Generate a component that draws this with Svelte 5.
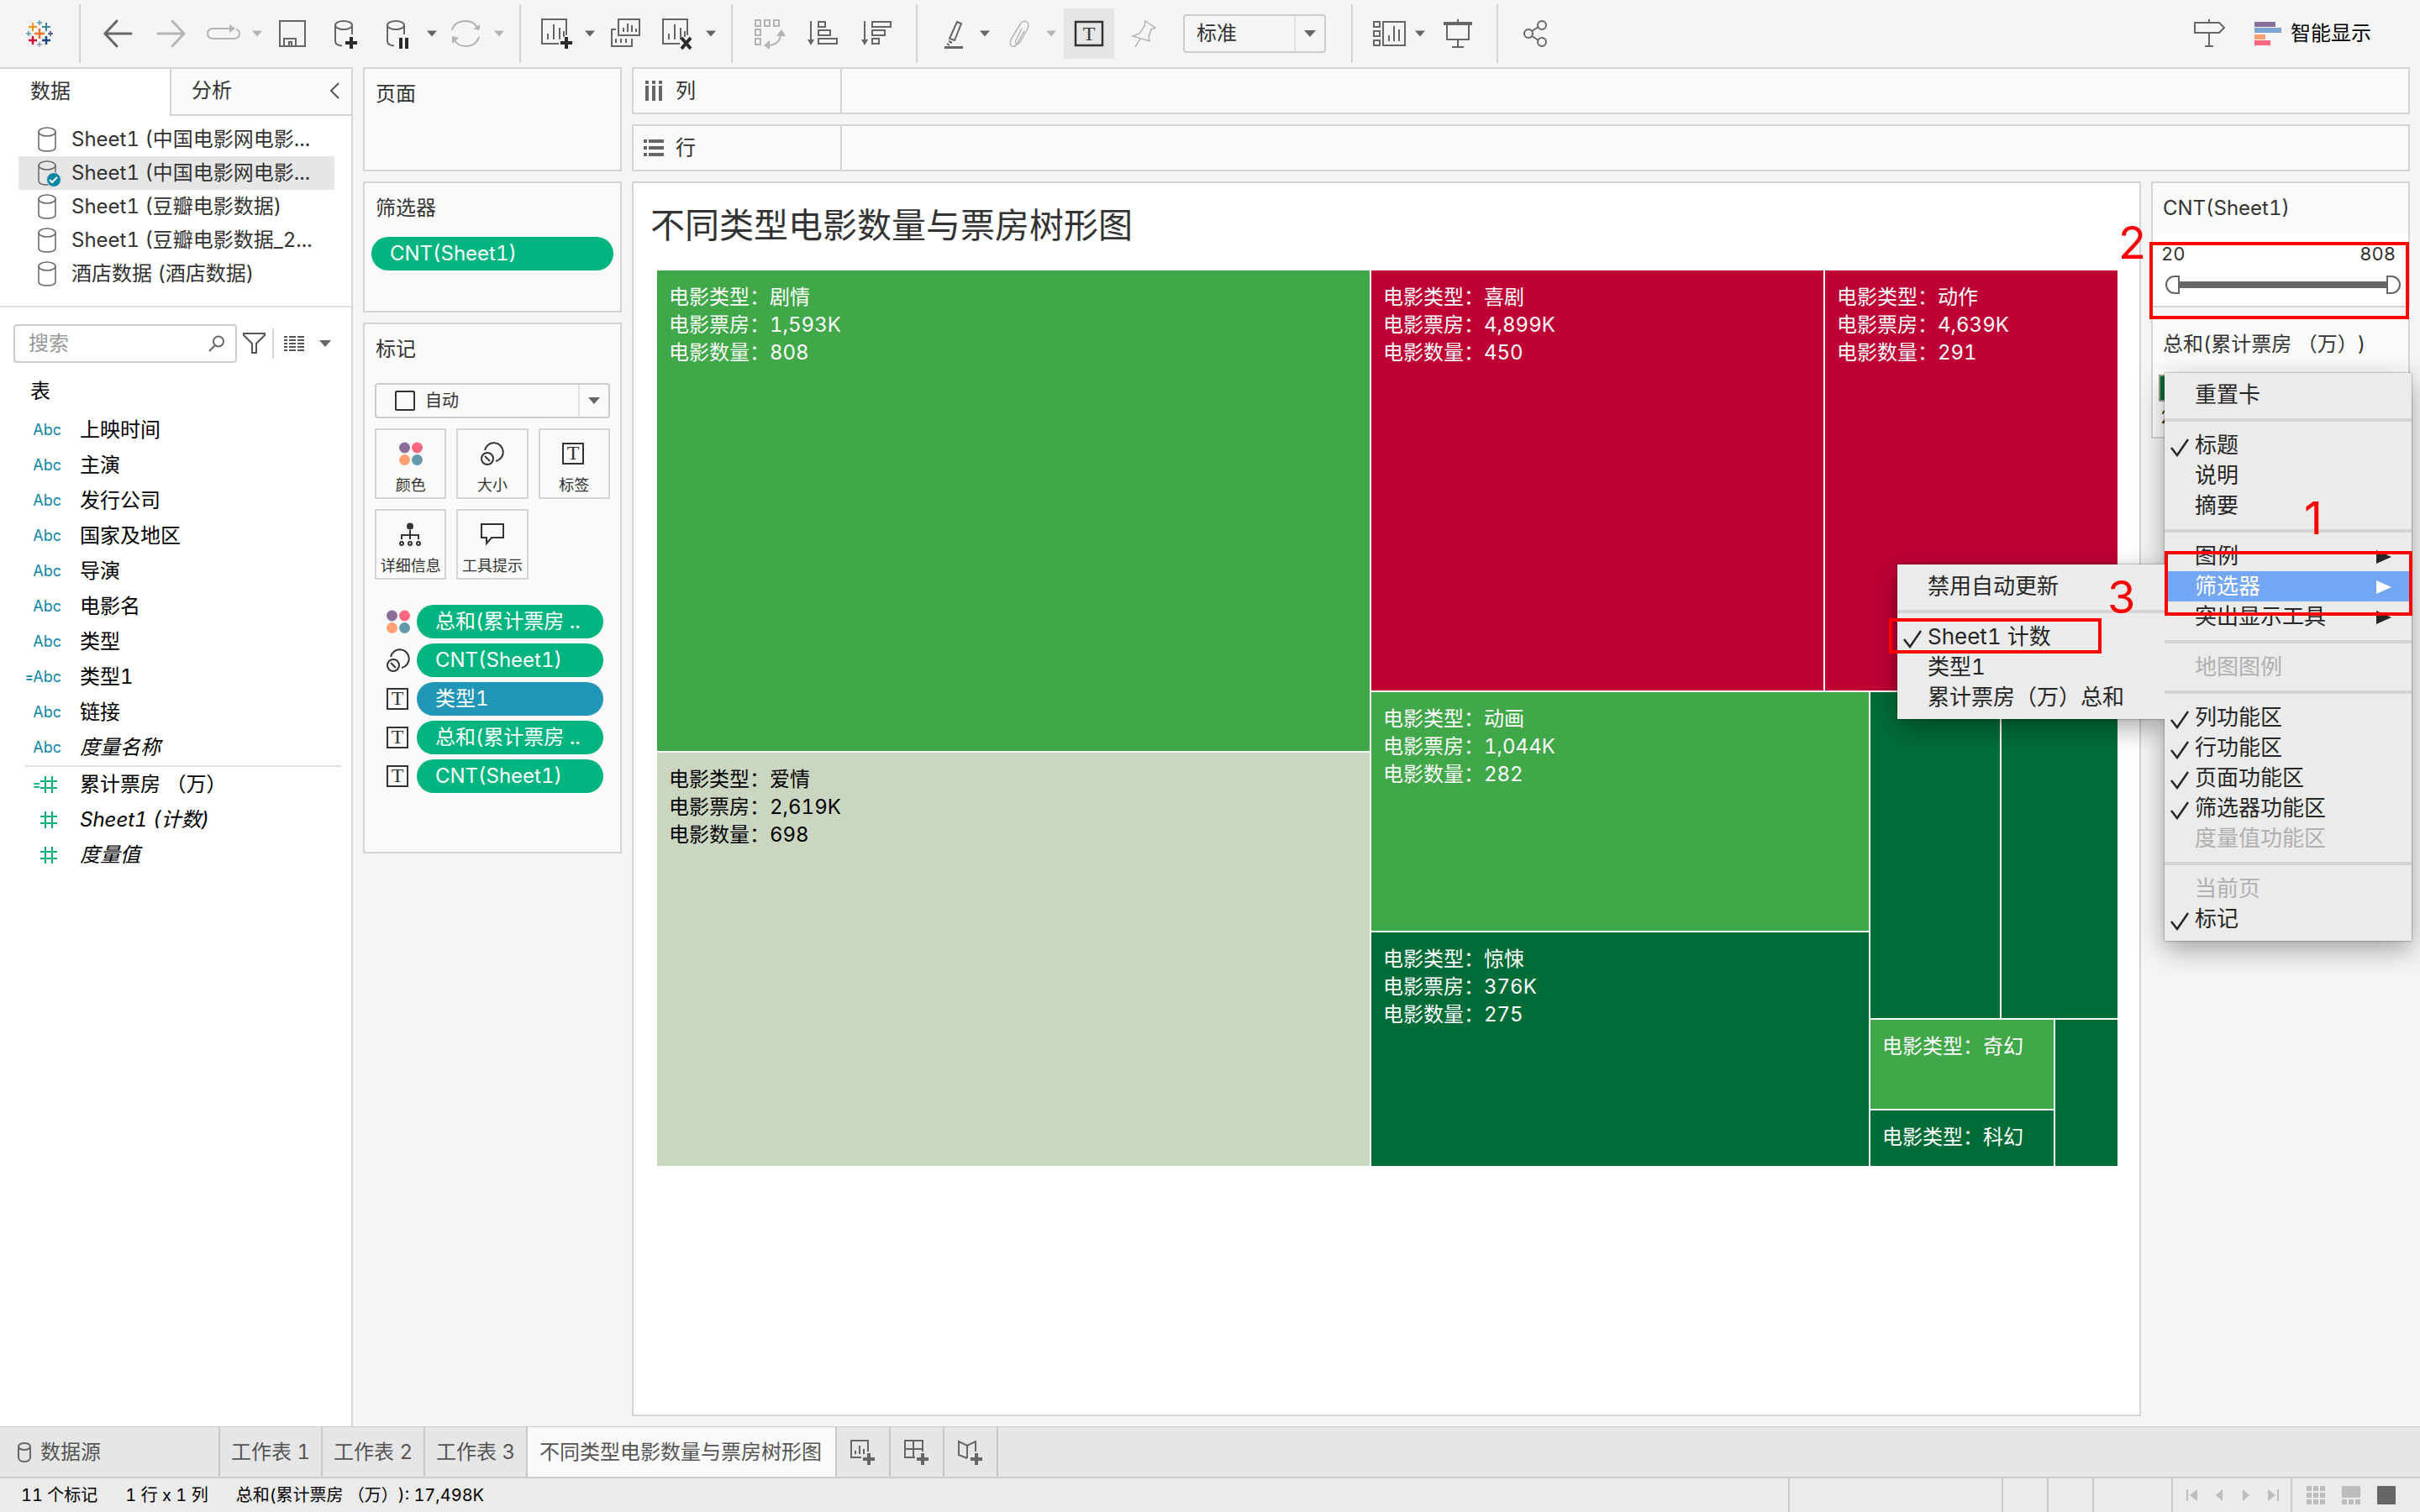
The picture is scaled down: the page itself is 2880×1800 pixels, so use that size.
<script lang="ts">
	type Tile = {
		size: number;
		tone: string;
		lines: string[];
	};

	type Split = {
		size: number;
		column?: boolean;
		items: (Tile | Split)[];
	};

	const sources = [
		{ name: 'Sheet1 (中国电影网电影...' },
		{ name: 'Sheet1 (中国电影网电影...', active: true },
		{ name: 'Sheet1 (豆瓣电影数据)' },
		{ name: 'Sheet1 (豆瓣电影数据_2...' },
		{ name: '酒店数据 (酒店数据)' }
	];

	const dimensions = [
		{ name: '上映时间' },
		{ name: '主演' },
		{ name: '发行公司' },
		{ name: '国家及地区' },
		{ name: '导演' },
		{ name: '电影名' },
		{ name: '类型' },
		{ name: '类型1', calc: true },
		{ name: '链接' },
		{ name: '度量名称', generated: true }
	];

	const measures = [
		{ name: '累计票房 （万）', calc: true },
		{ name: 'Sheet1 (计数)', generated: true },
		{ name: '度量值', generated: true }
	];

	const markButtons = [
		{ icon: 'color', label: '颜色' },
		{ icon: 'size', label: '大小' },
		{ icon: 'text', label: '标签' },
		{ icon: 'detail', label: '详细信息' },
		{ icon: 'tooltip', label: '工具提示' }
	];

	const markPills = [
		{ icon: 'color', label: '总和(累计票房 ..' },
		{ icon: 'size', label: 'CNT(Sheet1)' },
		{ icon: 'text', label: '类型1', dimension: true },
		{ icon: 'text', label: '总和(累计票房 ..' },
		{ icon: 'text', label: 'CNT(Sheet1)' }
	];

	const toolGroups = [
		{
			tight: false,
			tools: [
				{ icon: 'back', label: '撤消' },
				{ icon: 'forward', label: '重做', off: true },
				{ icon: 'replay', label: '重播', off: true, caret: true },
				{ icon: 'save', label: '保存' },
				{ icon: 'addSource', label: '新建数据源' },
				{ icon: 'pauseSource', label: '暂停自动更新', caret: true },
				{ icon: 'refresh', label: '运行更新', off: true, caret: true }
			]
		},
		{
			tight: false,
			tools: [
				{ icon: 'addSheet', label: '新建工作表', caret: true },
				{ icon: 'duplicate', label: '复制' },
				{ icon: 'clearSheet', label: '清除工作表', caret: true }
			]
		},
		{
			tight: false,
			tools: [
				{ icon: 'swap', label: '交换行和列', off: true },
				{ icon: 'sortAsc', label: '升序排序' },
				{ icon: 'sortDesc', label: '降序排序' }
			]
		},
		{
			tight: true,
			fit: true,
			tools: [
				{ icon: 'highlight', label: '突出显示', caret: true },
				{ icon: 'clip', label: '组成员', off: true, caret: true },
				{ icon: 'label', label: '显示标记标签', pressed: true },
				{ icon: 'pin', label: '固定轴', off: true }
			]
		},
		{
			tight: true,
			tools: [
				{ icon: 'cards', label: '显示/隐藏卡', caret: true },
				{ icon: 'present', label: '演示模式' }
			]
		},
		{
			tight: true,
			tools: [{ icon: 'share', label: '共享' }]
		}
	];

	const treemap: Split = {
		size: 1,
		items: [
			{
				size: 848,
				column: true,
				items: [
					{ size: 572, tone: 'green', lines: ['剧情', '1,593K', '808'] },
					{ size: 492, tone: 'pale', lines: ['爱情', '2,619K', '698'] }
				]
			},
			{
				size: 888,
				column: true,
				items: [
					{
						size: 500,
						items: [
							{ size: 538, tone: 'red', lines: ['喜剧', '4,899K', '450'] },
							{ size: 348, tone: 'red', lines: ['动作', '4,639K', '291'] }
						]
					},
					{
						size: 564,
						items: [
							{
								size: 592,
								column: true,
								items: [
									{ size: 284, tone: 'green', lines: ['动画', '1,044K', '282'] },
									{ size: 278, tone: 'deep', lines: ['惊悚', '376K', '275'] }
								]
							},
							{
								size: 294,
								column: true,
								items: [
									{
										size: 388,
										items: [
											{ size: 154, tone: 'deep', lines: [] },
											{ size: 138, tone: 'deep', lines: [] }
										]
									},
									{
										size: 174,
										items: [
											{
												size: 218,
												column: true,
												items: [
													{ size: 106, tone: 'green', lines: ['奇幻'] },
													{ size: 66, tone: 'deep', lines: ['科幻'] }
												]
											},
											{ size: 74, tone: 'deep', lines: [] }
										]
									}
								]
							}
						]
					}
				]
			}
		]
	};

	const captions = ['电影类型：', '电影票房：', '电影数量：'];

	const menu = [
		[{ label: '重置卡' }],
		[{ label: '标题', checked: true }, { label: '说明' }, { label: '摘要' }],
		[
			{ label: '图例', arrow: true },
			{ label: '筛选器', arrow: true, open: true },
			{ label: '突出显示工具', arrow: true }
		],
		[{ label: '地图图例', off: true }],
		[
			{ label: '列功能区', checked: true },
			{ label: '行功能区', checked: true },
			{ label: '页面功能区', checked: true },
			{ label: '筛选器功能区', checked: true },
			{ label: '度量值功能区', off: true }
		],
		[
			{ label: '当前页', off: true },
			{ label: '标记', checked: true }
		]
	];

	const submenu = [
		[{ label: '禁用自动更新' }],
		[
			{ label: 'Sheet1 计数', checked: true, marked: true },
			{ label: '类型1' },
			{ label: '累计票房（万）总和' }
		]
	];

	const sheets = ['工作表 1', '工作表 2', '工作表 3', '不同类型电影数量与票房树形图'];

	let current = $state(3);
	let low = $state(20);
	let high = $state(808);
</script>

{#snippet plus(x: number, y: number, r: number, w: number, color: string)}
	<path d="M{x - r} {y}h{r * 2}M{x} {y - r}v{r * 2}" stroke={color} stroke-width={w} />
{/snippet}

{#snippet caret()}
	<svg class="caret" width="14" height="8" viewBox="0 0 14 8"><path d="M0 0h14L7 8z" fill="currentColor" /></svg>
{/snippet}

{#snippet icon(name: string)}
	<svg class="icon" width="40" height="40" viewBox="0 0 40 40" fill="none" stroke="currentColor" stroke-width="2">
		{#if name === 'back'}
			<path d="M5 20h31M19 5L5 20l14 15" stroke-width="3" stroke-linecap="round" />
		{:else if name === 'forward'}
			<path d="M35 20H4M21 5l14 15-14 15" stroke-width="3" stroke-linecap="round" />
		{:else if name === 'replay'}
			<path d="M27 14H8q-7 0-7 6t7 6h24q7 0 7-6 0-4-4-5" />
			<path d="M27 9l7 5-7 5z" fill="currentColor" stroke="none" />
		{:else if name === 'save'}
			<path d="M5 5h30v30H5zM10 35v-9h14v9M16 35v-5h3v5" />
		{:else if name === 'addSource'}
			<ellipse cx="17" cy="10" rx="10" ry="5" />
			<path d="M7 10v19c0 3 3 5 8 5.500M27 10v11" />
			<path d="M19 31h14M26 24v14" class="strong" stroke-width="4" />
		{:else if name === 'pauseSource'}
			<ellipse cx="17" cy="10" rx="10" ry="5" />
			<path d="M7 10v19c0 3 3 5 8 5.500M27 10v11" />
			<path d="M23 25v13M30 25v13" class="strong" stroke-width="4" />
		{:else if name === 'refresh'}
			<path d="M4 16C6 9 12 5 20 5c8 0 13 4 15 11M36 24c-2 7-8 11-16 11-7 0-12-4-14-10" />
			<path d="M29 15h8v-6zM4 32v-9l8 2z" fill="currentColor" stroke="none" />
		{:else if name === 'addSheet' || name === 'clearSheet'}
			<path d="M23 32H3V3h29v19M10 27v-7M17 27V9M24 27V13M29 24v-7" />
			{#if name === 'addSheet'}
				<path d="M25 31h14M32 24v14" class="strong" stroke-width="4" />
			{:else}
				<path d="M25 25l11 13M36 25L25 38" class="strong" stroke-width="4" />
			{/if}
		{:else if name === 'duplicate'}
			<path d="M12 3h25v19H12zM18 18v-5M23 18V8M28 18v-8M33 18v-4M9 15H4v20h24v-9M9 31v-5M15 31v-5M21 31v-5" />
		{:else if name === 'swap'}
			<path d="M3 4h6v7H3zM14 4h6v7h-6zM25 4h6v7h-6zM3 15h6v7H3zM3 26h6v7H3zM33 20c0 8-4 13-14 14" />
			<path d="M28 23l6-8 5 8zM20 28v11l-7-5z" fill="currentColor" stroke="none" />
		{:else if name === 'sortAsc'}
			<path d="M5 5v24M14 6h8v6h-8zM14 16h14v6H14zM14 26h22v6H14z" />
			<path d="M1 27h8l-4 7z" fill="currentColor" stroke="none" />
		{:else if name === 'sortDesc'}
			<path d="M5 5v24M14 6h22v6H14zM14 16h15v6H14zM14 26h8v6h-8z" />
			<path d="M1 27h8l-4 7z" fill="currentColor" stroke="none" />
		{:else if name === 'highlight'}
			<path d="M24 6l5 2-8 20-6-2zM14 29l4 2M12 32l3 2" />
			<path d="M9 36.500h22" stroke-width="3" />
		{:else if name === 'clip'}
			<path d="M22 14l-7 14c-2 5 3 6 5 2l9-16c4-8-5-12-9-5L9 27c-3 9 4 10 7 6l9-16" stroke-width="1.500" />
		{:else if name === 'label'}
			<path d="M4 6h32v28H4z" stroke-width="2.500" />
			<text x="20" y="28" class="glyph">T</text>
		{:else if name === 'pin'}
			<path d="M22 5l12 8-5 2-3 9 1 5-20-6 8-3 6-9zM16 26L10 36" stroke-width="1.500" />
		{:else if name === 'cards'}
			<path d="M2 6h7v6H2zM2 17h7v6H2zM2 28h7v6H2zM13 6h26v28H13zM20 29v-7M26 29V11M32 29V15" />
		{:else if name === 'present'}
			<path d="M3 8h34" stroke-width="4" />
			<path d="M20 3v5M7 8v19h26V8M20 27v9M13 36h14" />
		{:else if name === 'share'}
			<circle cx="12" cy="20" r="5" />
			<circle cx="28" cy="10" r="5" />
			<circle cx="28" cy="30" r="5" />
			<path d="M16 17l8-5M16 23l8 5" />
		{:else if name === 'guide'}
			<path d="M3 7h29l6 6-6 6H3zM20 3v4M20 19v16M15 35h10" />
		{/if}
	</svg>
{/snippet}

{#snippet markIcon(name: string)}
	<svg class="icon" width="28" height="28" viewBox="0 0 28 28" fill="none" stroke="currentColor" stroke-width="2">
		{#if name === 'color'}
			<g stroke="none">
				<circle cx="6.500" cy="7" r="6.500" fill="#8a6d9b" />
				<circle cx="21.500" cy="7" r="6.500" fill="#ff6680" />
				<circle cx="6.500" cy="21.500" r="6.500" fill="#ff9f73" />
				<circle cx="21.500" cy="21.500" r="6.500" fill="#6399a8" />
			</g>
		{:else if name === 'size'}
			<path d="M5 10A11 11 0 1 1 18 23" />
			<circle cx="8" cy="20" r="7" />
			<path d="M5 17l6 6" />
		{:else if name === 'text'}
			<path d="M1 2h24v24H1z" />
			<text x="13" y="21" class="glyph">T</text>
		{:else if name === 'detail'}
			<circle cx="13" cy="4.500" r="4" fill="currentColor" stroke="none" />
			<path d="M13 9v11M3 20v-5h20v5" />
			<circle cx="3" cy="25" r="2" /><circle cx="13" cy="25" r="2" /><circle cx="23" cy="25" r="2" />
		{:else if name === 'tooltip'}
			<path d="M1 2h26v16H13l-6 7v-7H1z" />
		{/if}
	</svg>
{/snippet}

{#snippet cylinder()}
	<svg class="icon" width="22" height="30" viewBox="0 0 22 30" fill="none" stroke="currentColor" stroke-width="1.500">
		<ellipse cx="11" cy="6" rx="10" ry="5" />
		<path d="M1 6v18c0 3 4 5 10 5s10-2 10-5V6" />
	</svg>
{/snippet}

{#snippet cell(node: Tile | Split)}
	{#if 'items' in node}
		<div class="split" class:column={node.column} style="flex-grow: {node.size}">
			{#each node.items as item}
				{@render cell(item)}
			{/each}
		</div>
	{:else}
		<div class="tile {node.tone}" style="flex-grow: {node.size}">
			{#each node.lines as line, i}
				<p>{captions[i]}{line}</p>
			{/each}
		</div>
	{/if}
{/snippet}

{#snippet tick()}
	<svg class="tick" width="22" height="22" viewBox="0 0 22 22">
		<path d="M1 11l7 9L21 1" fill="none" stroke="currentColor" stroke-width="2.500" />
	</svg>
{/snippet}

<div class="app">
	<header class="toolbar">
		<a class="logo" href="#start" aria-label="开始页面">
			<svg width="32" height="32" viewBox="0 0 32 32">
				{@render plus(16, 16, 6, 2.5, '#f47421')}
				{@render plus(16, 3, 3, 1.5, '#5b9aa9')}
				{@render plus(8, 8, 5, 2, '#f28e1c')}
				{@render plus(24, 8, 5, 2, '#3a8594')}
				{@render plus(3, 16, 3, 1.5, '#5b9aa9')}
				{@render plus(29, 16, 3, 2, '#5b6591')}
				{@render plus(8, 24, 5, 2.5, '#d0103a')}
				{@render plus(24, 24, 5, 2.5, '#1f457e')}
				{@render plus(16, 29, 3, 1.5, '#8a95bd')}
			</svg>
		</a>
		{#each toolGroups as group}
			<div class="group" class:tight={group.tight}>
				{#each group.tools as tool}
					<button class="tool" class:off={tool.off} class:pressed={tool.pressed} class:drop={tool.caret} aria-label={tool.label}>
						<span class="tool-icon">{@render icon(tool.icon)}</span>
						{#if tool.caret}{@render caret()}{/if}
					</button>
				{/each}
				{#if group.fit}
					<div class="select fit">
						<select aria-label="适合">
							<option>标准</option>
						</select>
						<span class="select-caret">{@render caret()}</span>
					</div>
				{/if}
			</div>
		{/each}
		<button class="tool guide" aria-label="数据指南">{@render icon('guide')}</button>
		<button class="show-me">
			<svg width="32" height="28" viewBox="0 0 32 28">
				<path d="M0 0h25v6H0z" fill="#8a6d9b" />
				<path d="M0 7h32v6H0z" fill="#7aa6d1" />
				<path d="M0 15h13v6H0z" fill="#ff9f73" />
				<path d="M0 22h19v6H0z" fill="#ff6680" />
			</svg>
			智能显示
		</button>
	</header>

	<main class="workspace">
		<aside class="sidebar">
			<div class="side-tabs">
				<button class="side-tab active">数据</button>
				<button class="side-tab">
					分析
					<svg width="12" height="20" viewBox="0 0 12 20"><path d="M11 1L2 10l9 9" fill="none" stroke="#555" stroke-width="2" /></svg>
				</button>
			</div>
			<ul class="sources">
				{#each sources as source}
					<li class:active={source.active}>
						<span class="source-icon">
							{@render cylinder()}
							{#if source.active}
								<svg class="badge" width="18" height="18" viewBox="0 0 18 18">
									<circle cx="9" cy="9" r="8.500" fill="#0b85a5" stroke="#e6e6e6" />
									<path d="M4 9l3 3 6-6" fill="none" stroke="#fff" stroke-width="2" />
								</svg>
							{/if}
						</span>
						{source.name}
					</li>
				{/each}
			</ul>
			<div class="search-row">
				<label class="search">
					<input type="text" placeholder="搜索" aria-label="搜索" />
					<svg width="20" height="20" viewBox="0 0 20 20" fill="none" stroke="#666" stroke-width="2">
						<circle cx="12" cy="7.500" r="6" /><path d="M8 12l-7 7" />
					</svg>
				</label>
				<button class="mini" aria-label="筛选字段">
					<svg width="28" height="26" viewBox="0 0 28 26" fill="none" stroke="#555" stroke-width="2">
						<path d="M1 1h25v2l-10 10v11h-5V13L1 3z" />
					</svg>
				</button>
				<button class="mini view" aria-label="视图">
					<svg width="24" height="20" viewBox="0 0 24 20" stroke="#555" stroke-width="2">
						<path d="M0 2h4M6 2h8M16 2h8M0 6h4M6 6h8M16 6h8M0 10h4M6 10h8M16 10h8M0 14h4M6 14h8M16 14h8M0 18h4M6 18h8M16 18h8" />
					</svg>
					{@render caret()}
				</button>
			</div>
			<h2 class="table-name">表</h2>
			<ul class="fields">
				{#each dimensions as field}
					<li class:generated={field.generated}>
						<span class="type">{#if field.calc}<b>=</b>{/if}Abc</span>
						{field.name}
					</li>
				{/each}
			</ul>
			<ul class="fields measures">
				{#each measures as field}
					<li class:generated={field.generated}>
						<span class="type">
							{#if field.calc}<b>=</b>{/if}
							<svg width="20" height="20" viewBox="0 0 20 20" stroke="currentColor" stroke-width="2">
								<path d="M6 0v20M14 0v20M0 6h20M0 14h20" />
							</svg>
						</span>
						{field.name}
					</li>
				{/each}
			</ul>
		</aside>

		<div class="content">
			<div class="shelves">
				<section class="card pages">
					<h3>页面</h3>
				</section>
				<section class="card filters">
					<h3>筛选器</h3>
					<button class="pill">CNT(Sheet1)</button>
				</section>
				<section class="card marks">
					<h3>标记</h3>
					<div class="marks-body">
						<div class="select mark-type">
							<span class="square"></span>
							<select aria-label="标记类型">
								<option>自动</option>
							</select>
							<span class="select-caret">{@render caret()}</span>
						</div>
						<div class="mark-buttons">
							{#each markButtons as button}
								<button>{@render markIcon(button.icon)}{button.label}</button>
							{/each}
						</div>
						<ul class="mark-pills">
							{#each markPills as item}
								<li>
									{@render markIcon(item.icon)}
									<button class="pill" class:dimension={item.dimension}>{item.label}</button>
								</li>
							{/each}
						</ul>
					</div>
				</section>
			</div>

			<div class="stage">
				<div class="shelf">
					<span class="shelf-name">
						<svg width="24" height="24" viewBox="0 0 24 24" stroke="#666" stroke-width="4">
							<path d="M4 0v4M12 0v4M20 0v4M4 6v18M12 6v18M20 6v18" />
						</svg>
						列
					</span>
				</div>
				<div class="shelf">
					<span class="shelf-name">
						<svg width="24" height="24" viewBox="0 0 24 24" stroke="#666" stroke-width="4">
							<path d="M0 4h4M6 4h18M0 12h4M6 12h18M0 20h4M6 20h18" />
						</svg>
						行
					</span>
				</div>
				<div class="view-row">
					<section class="viz">
						<h1>不同类型电影数量与票房树形图</h1>
						<div class="treemap">{@render cell(treemap)}</div>
					</section>

					<div class="legends">
						<section class="card legend">
							<h3>CNT(Sheet1)</h3>
							<div class="legend-body">
								<div class="range-values"><span>{low}</span><span>{high}</span></div>
								<div class="range">
									<input class="low" type="range" min="20" max="808" bind:value={low} aria-label="最小值" />
									<input class="high" type="range" min="20" max="808" bind:value={high} aria-label="最大值" />
								</div>
							</div>
							<div class="note note-range"><span>2</span></div>
						</section>

						<section class="card legend">
							<h3>总和(累计票房 （万）)</h3>
							<div class="legend-body ramp">
								<div class="ramp-bar"></div>
								<span>2</span>
							</div>

							<div class="menu main-menu" role="menu">
								{#each menu as section}
									<div class="menu-section">
										{#each section as item}
											<div class="menu-row" class:open={item.open}>
												<button role="menuitem" disabled={item.off}>
													{#if item.checked}{@render tick()}{/if}
													{item.label}
													{#if item.arrow}
														<svg class="arrow" width="18" height="16" viewBox="0 0 18 16"><path d="M0 0l18 8-18 8z" fill="currentColor" /></svg>
													{/if}
												</button>
												{#if item.open}
													<div class="menu submenu" role="menu">
														{#each submenu as part}
															<div class="menu-section">
																{#each part as entry}
																	<div class="menu-row">
																		<button role="menuitem">
																			{#if entry.checked}{@render tick()}{/if}
																			{entry.label}
																		</button>
																		{#if entry.marked}
																			<div class="note note-entry"><span>3</span></div>
																		{/if}
																	</div>
																{/each}
															</div>
														{/each}
													</div>
													<div class="note note-item"><span>1</span></div>
												{/if}
											</div>
										{/each}
									</div>
								{/each}
							</div>
						</section>
					</div>
				</div>
			</div>
		</div>
	</main>

	<nav class="sheet-tabs">
		<button class="sheet source-tab">
			<svg width="18" height="24" viewBox="0 0 18 24" fill="none" stroke="#666" stroke-width="2">
				<ellipse cx="9" cy="5" rx="7" ry="4" /><path d="M2 5v13c0 3 3 5 7 5s7-2 7-5V5" />
			</svg>
			数据源
		</button>
		{#each sheets as sheet, i}
			<button class="sheet" class:current={i === current} onclick={() => (current = i)}>{sheet}</button>
		{/each}
		<button class="new-sheet" aria-label="新建工作表">
			<svg width="30" height="30" viewBox="0 0 30 30" fill="none" stroke="#666" stroke-width="2">
				<path d="M13 21H1V1h20v13M6 17v-4M11 17V7M16 17v-6" /><path d="M15 23h14M22 16v14" stroke-width="4" />
			</svg>
		</button>
		<button class="new-sheet" aria-label="新建仪表板">
			<svg width="30" height="30" viewBox="0 0 30 30" fill="none" stroke="#666" stroke-width="2">
				<path d="M13 21H1V1h21v13M1 11h21M11 1v20" /><path d="M15 23h14M22 16v14" stroke-width="4" />
			</svg>
		</button>
		<button class="new-sheet" aria-label="新建故事">
			<svg width="30" height="30" viewBox="0 0 30 30" fill="none" stroke="#666" stroke-width="2">
				<path d="M11 22L1 18V2l10 5 10-5v12M11 7v15" /><path d="M15 23h14M22 16v14" stroke-width="4" />
			</svg>
		</button>
	</nav>

	<footer class="status">
		<span>11 个标记</span>
		<span>1 行 x 1 列</span>
		<span>总和(累计票房 （万）): 17,498K</span>
		<div class="panes">
			<i class="wide"></i><i></i><i></i><i class="mid"></i>
			<div class="pager">
				<button aria-label="第一个"><svg width="14" height="14" viewBox="0 0 14 14"><path d="M0 0h2v14H0zM13 0v14L4 7z" fill="currentColor" /></svg></button>
				<button aria-label="上一个"><svg width="14" height="14" viewBox="0 0 14 14"><path d="M11 0v14L3 7z" fill="currentColor" /></svg></button>
				<button aria-label="下一个"><svg width="14" height="14" viewBox="0 0 14 14"><path d="M3 0v14l8-7z" fill="currentColor" /></svg></button>
				<button aria-label="最后一个"><svg width="14" height="14" viewBox="0 0 14 14"><path d="M12 0h2v14h-2zM1 0v14l9-7z" fill="currentColor" /></svg></button>
			</div>
			<div class="layouts">
				<button aria-label="缩略图">
					<svg width="22" height="22" viewBox="0 0 22 22" fill="currentColor">
						<path d="M0 0h6v6H0zM8 0h6v6H8zM16 0h6v6h-6zM0 8h6v6H0zM8 8h6v6H8zM16 8h6v6h-6zM0 16h6v6H0zM8 16h6v6H8zM16 16h6v6h-6z" />
					</svg>
				</button>
				<button aria-label="胶片">
					<svg width="22" height="22" viewBox="0 0 22 22" fill="currentColor">
						<path d="M0 0h22v14H0zM0 16h6v6H0zM8 16h6v6H8zM16 16h6v6h-6z" />
					</svg>
				</button>
				<button class="on" aria-label="选项卡">
					<svg width="22" height="22" viewBox="0 0 22 22" fill="currentColor"><path d="M0 0h22v22H0z" /></svg>
				</button>
			</div>
		</div>
	</footer>
</div>

<style>
	:global(body) {
		margin: 0;
	}

	.app {
		display: flex;
		flex-direction: column;
		min-height: 100vh;
		background: #f5f5f5;
		color: #333;
		font-family: Inter, 'Noto Sans CJK SC', sans-serif;
		font-size: 24px;
		font-variant-numeric: tabular-nums;
		line-height: 32px;
		text-spacing-trim: space-all;
	}

	h1,
	h2,
	h3,
	p,
	ul {
		margin: 0;
		padding: 0;
		font-weight: 400;
		list-style: none;
	}

	button,
	select,
	input {
		margin: 0;
		padding: 0;
		border: 0;
		background: none;
		color: inherit;
		font: inherit;
		white-space: nowrap;
	}

	svg {
		display: block;
		flex: none;
	}

	.glyph {
		fill: currentColor;
		stroke: none;
		font-family: 'Liberation Serif', serif;
		font-size: 24px;
		text-anchor: middle;
	}

	/* toolbar */
	.toolbar {
		display: flex;
		align-items: center;
		height: 80px;
		color: #666;
	}

	.logo {
		display: flex;
		align-items: center;
		justify-content: center;
		width: 94px;
		height: 70px;
		border-right: 2px solid #d4d4d4;
	}

	.group {
		display: flex;
		align-items: center;
		height: 70px;
		padding: 0 14px 0 12px;
		border-right: 2px solid #d4d4d4;
	}

	.tool {
		display: flex;
		align-items: center;
		height: 60px;
	}

	.tool-icon {
		display: flex;
		justify-content: center;
		width: 64px;
	}

	.drop .tool-icon {
		width: 60px;
	}

	.tool .caret {
		width: 12px;
		margin: 0 4px;
	}

	.tight {
		gap: 5px;
		padding: 0 16px;
	}

	.group:nth-last-child(3) {
		padding-left: 14px;
		border-right: 0;
	}

	.tight .tool-icon {
		width: 60px;
	}

	.tight .drop .tool-icon {
		width: 54px;
	}

	.off {
		color: #b4b4b4;
	}

	.pressed {
		background: #e6e6e6;
		color: #333;
	}

	.strong {
		stroke: #2b2b2b;
	}

	.guide {
		margin-left: auto;
		margin-right: 34px;
	}

	.show-me {
		display: flex;
		align-items: center;
		gap: 11px;
		margin-right: 58px;
		color: #000;
	}

	.select {
		display: flex;
		align-items: stretch;
		box-sizing: border-box;
		border: 2px solid #ccc;
		border-radius: 4px;
	}

	.select select {
		flex: 1;
		min-width: 0;
		appearance: none;
		color: #333;
	}

	.select-caret {
		display: flex;
		align-items: center;
		justify-content: center;
		width: 34px;
		border-left: 2px solid #e1e1e1;
		color: #666;
	}

	.fit {
		width: 170px;
		height: 46px;
		margin: 0 14px 0 12px;
	}

	.fit select {
		padding-left: 14px;
	}

	/* data pane */
	.workspace {
		display: flex;
		flex: 1;
		gap: 12px;
	}

	.sidebar {
		box-sizing: border-box;
		width: 420px;
		border: solid #d4d4d4;
		border-width: 2px 2px 0 0;
		background: #fff;
	}

	.side-tabs {
		display: flex;
	}

	.side-tab {
		display: flex;
		flex: 1;
		align-items: center;
		justify-content: space-between;
		height: 56px;
		padding: 0 14px 2px 24px;
		border: solid #d4d4d4;
		border-width: 0 0 2px 2px;
		background: #fafafa;
	}

	.side-tab.active {
		flex: 0 0 202px;
		padding-left: 36px;
		border: 0;
		background: #fff;
	}

	.sources {
		padding: 8px 20px 18px 22px;
		border-bottom: 2px solid #e1e1e1;
	}

	.sources li {
		display: flex;
		align-items: center;
		gap: 18px;
		height: 40px;
		padding-left: 23px;
		white-space: nowrap;
	}

	.sources li.active {
		background: #e6e6e6;
	}

	.source-icon {
		position: relative;
		color: #666;
	}

	.badge {
		position: absolute;
		right: -6px;
		bottom: -2px;
	}

	.search-row {
		display: flex;
		align-items: center;
		margin-top: 20px;
		padding: 0 24px 0 16px;
	}

	.search {
		display: flex;
		flex: 1;
		align-items: center;
		box-sizing: border-box;
		min-width: 0;
		height: 46px;
		padding: 0 12px 0 16px;
		border: 2px solid #ccc;
		border-radius: 4px;
	}

	.search input {
		flex: 1;
		min-width: 0;
		outline: 0;
	}

	.search input::placeholder {
		color: #999;
		opacity: 1;
	}

	.mini {
		display: flex;
		align-items: center;
		justify-content: space-between;
		height: 36px;
		padding: 0 7px;
		color: #666;
	}

	.mini.view {
		gap: 18px;
		padding: 0 0 0 12px;
		border-left: 2px solid #d4d4d4;
	}

	.table-name {
		margin: 18px 36px 9px;
		color: #000;
		font-size: 24px;
	}

	.fields {
		margin: 0 12px 0 30px;
		color: #000;
	}

	.measures {
		border-top: 2px solid #e1e1e1;
	}

	.fields li {
		display: flex;
		align-items: center;
		height: 42px;
	}

	.generated {
		font-style: italic;
	}

	.type {
		display: flex;
		align-items: center;
		justify-content: flex-end;
		width: 43px;
		margin-right: 22px;
		color: #0b85a5;
		font-size: 18px;
		font-style: normal;
	}

	.type b {
		font-size: 14px;
	}

	.measures .type {
		width: 38px;
		margin-right: 27px;
		color: #00b180;
	}

	/* shelves and cards */
	.content {
		display: flex;
		flex: 1;
		gap: 12px;
		min-width: 0;
		padding: 0 12px 12px 0;
	}

	.card {
		box-sizing: border-box;
		border: 2px solid #d4d4d4;
		background: #fafafa;
	}

	.card h3 {
		padding: 14px 13px;
		font-size: 24px;
		white-space: nowrap;
	}

	.shelves {
		display: flex;
		flex-direction: column;
		gap: 12px;
		width: 308px;
	}

	.pages {
		min-height: 124px;
	}

	.filters {
		min-height: 156px;
		padding: 0 8px;
	}

	.filters h3 {
		padding: 14px 5px 18px;
	}

	.pill {
		width: 100%;
		height: 40px;
		padding: 0 22px;
		border-radius: 20px;
		background: #00b580;
		color: #fff;
		text-align: left;
	}

	.pill.dimension {
		background: #2196b6;
	}

	.marks {
		padding-bottom: 70px;
	}

	.marks-body {
		padding: 10px 12px 0;
	}

	.mark-type {
		align-items: center;
		height: 42px;
	}

	.mark-type select {
		font-size: 20px;
	}

	.mark-type .select-caret {
		align-self: stretch;
	}

	.square {
		box-sizing: border-box;
		width: 24px;
		height: 24px;
		margin: 0 12px 0 22px;
		border: 2px solid #333;
		border-radius: 2px;
	}

	.mark-buttons {
		display: grid;
		grid-template-columns: repeat(3, 1fr);
		gap: 12px;
		margin-top: 12px;
	}

	.mark-buttons button {
		display: flex;
		flex-direction: column;
		align-items: center;
		justify-content: space-between;
		box-sizing: border-box;
		min-width: 0;
		height: 84px;
		padding: 14px 0 2px;
		border: 2px solid #d4d4d4;
		font-size: 18px;
		line-height: 24px;
	}

	.mark-pills {
		display: flex;
		flex-direction: column;
		gap: 6px;
		margin: 30px 8px 0 14px;
	}

	.mark-pills li {
		display: flex;
		align-items: center;
		gap: 8px;
	}

	.stage {
		display: flex;
		flex: 1;
		flex-direction: column;
		gap: 12px;
		min-width: 0;
	}

	.shelf {
		display: flex;
		box-sizing: border-box;
		height: 56px;
		border: 2px solid #d4d4d4;
		background: #fafafa;
	}

	.shelf-name {
		display: flex;
		align-items: center;
		gap: 14px;
		width: 234px;
		padding-left: 12px;
		border-right: 2px solid #d4d4d4;
	}

	.view-row {
		display: flex;
		flex: 1;
		gap: 12px;
	}

	.viz {
		flex: 1;
		min-width: 0;
		padding: 20px 26px 26px 28px;
		border: 2px solid #d4d4d4;
		background: #fff;
	}

	.viz h1 {
		margin: 0 0 24px -8px;
		font-size: 41px;
		line-height: 60px;
	}

	.treemap {
		display: flex;
		aspect-ratio: 1738 / 1066;
	}

	.split {
		display: flex;
		flex: 1 1 0;
		gap: 2px;
		min-width: 0;
		min-height: 0;
	}

	.column {
		flex-direction: column;
	}

	.tile {
		flex: 1 1 0;
		box-sizing: border-box;
		min-width: 0;
		min-height: 0;
		overflow: hidden;
		color: #fff;
		line-height: 33px;
		white-space: nowrap;
	}

	.tile p {
		margin: 0 14px;
	}

	.tile p:first-child {
		margin-top: 15px;
	}

	.green {
		background: #41a84a;
	}

	.deep {
		background: #006d38;
	}

	.red {
		background: #be0035;
	}

	.pale {
		background: #cbd6c0;
		color: #000;
	}

	/* legend cards */
	.legends {
		display: flex;
		flex-direction: column;
		gap: 12px;
		width: 308px;
	}

	.legend {
		position: relative;
	}

	.legend h3 {
		padding: 14px 12px;
	}

	.legend-body {
		padding: 8px 9px 14px 10px;
		background: #fff;
		font-size: 22px;
	}

	.range-values {
		display: flex;
		justify-content: space-between;
		padding-right: 6px;
	}

	.range {
		position: relative;
		height: 22px;
		margin: 10px 0 0 5px;
		background: linear-gradient(#666, #666) center / 100% 8px no-repeat;
		background-clip: content-box;
		padding: 0 10px;
	}

	.range input {
		position: absolute;
		inset: 0;
		width: 100%;
		height: 22px;
		appearance: none;
		pointer-events: none;
	}

	.range input::-webkit-slider-thumb {
		appearance: none;
		box-sizing: border-box;
		width: 17px;
		height: 22px;
		border: 2px solid #666;
		background: #fff;
		pointer-events: auto;
	}

	.range .low::-webkit-slider-thumb {
		border-radius: 11px 0 0 11px;
	}

	.range .high::-webkit-slider-thumb {
		border-radius: 0 11px 11px 0;
	}

	.ramp {
		padding: 6px 7px;
	}

	.ramp-bar {
		box-sizing: border-box;
		height: 32px;
		border: 2px solid #a3a085;
		background: linear-gradient(90deg, #006837, #41a84a, #cbd6c0, #be0035);
	}

	.ramp span {
		display: block;
		margin: 2px;
	}

	/* menus */
	.menu {
		position: absolute;
		z-index: 5;
		padding: 8px 0;
		background: #ebebeb;
		box-shadow: 0 0 2px rgba(0, 0, 0, 0.5), 0 10px 30px rgba(0, 0, 0, 0.35);
		color: #262626;
		font-size: 26px;
	}

	.main-menu {
		top: 64px;
		right: -4px;
		width: 294px;
	}

	.submenu {
		top: -8px;
		right: 100%;
		width: 318px;
		clip-path: inset(-60px 0 -60px -60px);
	}

	.menu-section + .menu-section::before {
		content: '';
		display: block;
		height: 4px;
		margin: 10px 0;
		background: #d5d5d5;
	}

	.menu-row {
		position: relative;
	}

	.menu-row button {
		display: flex;
		align-items: center;
		width: 100%;
		height: 36px;
		padding: 0 24px 1px 36px;
	}

	.menu-row button:disabled {
		color: #b0b0b0;
	}

	.menu-row.open {
		z-index: 1;
	}

	.open > button {
		background: #74a7f3;
		color: #fff;
	}

	.tick {
		width: 22px;
		margin: 6px 7px 0 -29px;
	}

	.arrow {
		margin: 3px 0 0 auto;
	}

	/* tutorial marks */
	.note {
		position: absolute;
		z-index: 6;
		box-sizing: border-box;
		border: 4px solid #f00;
		color: #f00;
		font-size: 54px;
		font-variant-numeric: normal;
		line-height: 54px;
		pointer-events: none;
	}

	.note span {
		position: absolute;
	}

	.note-range {
		top: 70px;
		right: -1px;
		left: -4px;
		height: 92px;
	}

	.note-range span {
		top: -30px;
		right: 100%;
		margin-right: 8px;
	}

	.note-item {
		top: -24px;
		right: -1px;
		left: 0;
		height: 77px;
	}

	.note-item span {
		top: -70px;
		left: 162px;
	}

	.note-entry {
		top: -4px;
		left: -10px;
		width: 253px;
		height: 42px;
	}

	.note-entry span {
		bottom: 36px;
		left: 256px;
	}

	/* sheet tabs and status bar */
	.sheet-tabs {
		display: flex;
		height: 59px;
		border: solid #ccc;
		border-width: 1px 0 2px;
		background: #e6e6e6;
		color: #555;
	}

	.sheet {
		min-width: 122px;
		padding: 0 12px;
		border-right: 2px solid #c8c8c8;
	}

	.sheet.current {
		padding: 0 16px 0 14px;
		background: #fafafa;
	}

	.source-tab {
		display: flex;
		align-items: center;
		gap: 10px;
		width: 262px;
		padding: 0 20px;
	}

	.new-sheet {
		display: flex;
		align-items: center;
		justify-content: center;
		width: 64px;
		border-right: 2px solid #c8c8c8;
	}

	.status {
		display: flex;
		align-items: center;
		gap: 33px;
		height: 40px;
		padding-left: 25px;
		background: #ebebeb;
		color: #000;
		font-size: 20px;
	}

	.panes {
		display: flex;
		align-self: stretch;
		margin-left: auto;
		color: #bdbdbd;
	}

	.panes > * {
		box-sizing: border-box;
		width: 54px;
		border-left: 2px solid #c8c8c8;
	}

	.panes .wide {
		width: 254px;
	}

	.panes .mid {
		width: 94px;
	}

	.panes .pager,
	.panes .layouts {
		display: flex;
		align-items: center;
		justify-content: space-between;
		width: 142px;
		padding: 0 14px 0 16px;
	}

	.panes .layouts {
		width: 154px;
		padding: 0 29px 0 17px;
	}

	.panes .on {
		color: #666;
	}
</style>
